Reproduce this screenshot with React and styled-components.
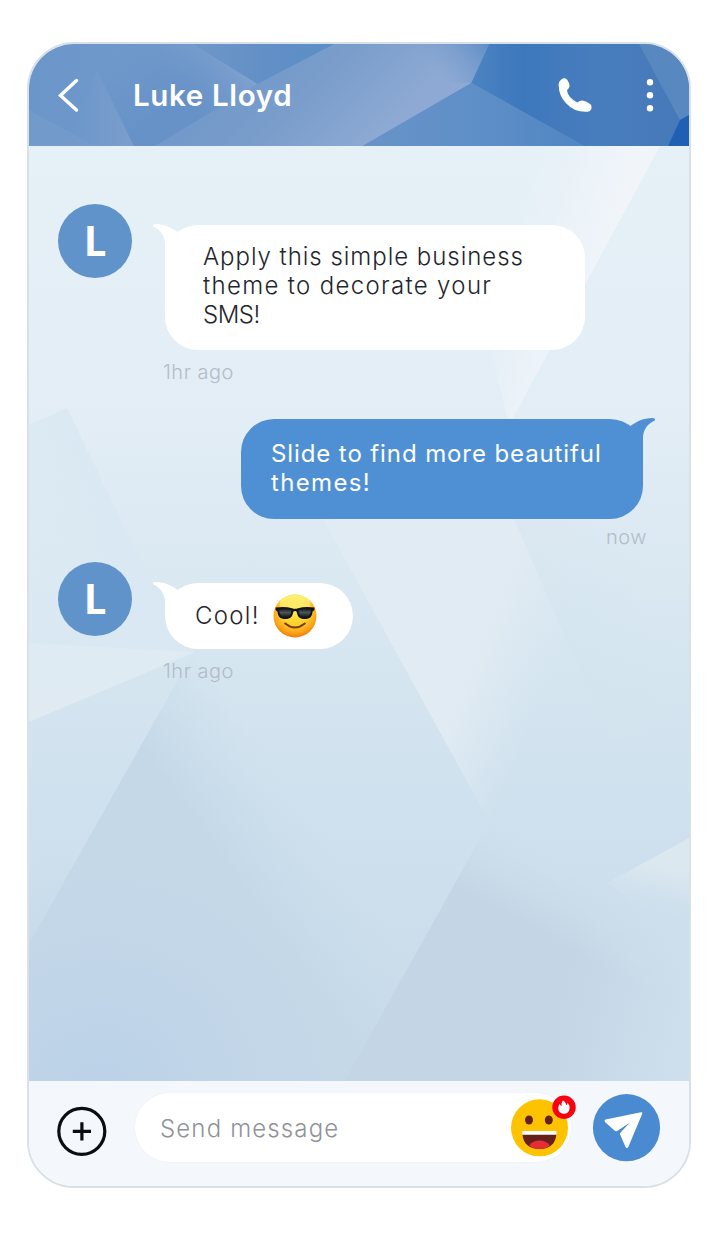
import React from "react";
import styled, { createGlobalStyle } from "styled-components";

const Global = createGlobalStyle`
  * { box-sizing: border-box; }
  body { margin: 0; background: #fff; font-family: Inter, "Open Sans", sans-serif; }
`;

const Page = styled.main`
  width: 719px;
  height: 1253px;
  padding: 42px 28px 65px 27px;
  background: #fff;
`;

const Phone = styled.section`
  width: 664px;
  height: 1146px;
  display: flex;
  flex-direction: column;
  overflow: hidden;
  border: 2px solid #d9e1e7;
  border-radius: 47px;
`;

const Backdrop = styled.svg`
  position: absolute;
  inset: 0;
  width: 100%;
  height: 100%;
  z-index: -1;
`;

const Header = styled.header`
  position: relative;
  isolation: isolate;
  flex: 0 0 102px;
  display: flex;
  align-items: center;
  padding: 0 31px 0 28px;
`;

const Title = styled.h1`
  flex: 1;
  margin: 0 0 0 54px;
  font-size: 29.500px;
  line-height: 40px;
  font-weight: 600;
  letter-spacing: ${(p) => p.$track}px;
  color: #fff;
`;

const IconButton = styled.button`
  display: flex;
  flex: none;
  padding: 0;
  border: 0;
  background: none;
  margin: ${(p) => p.$margin || 0};
`;

const Thread = styled.div`
  position: relative;
  isolation: isolate;
  flex: 0 0 935px;
  display: flex;
  flex-direction: column;
  padding: 58px 43px 0 29px;
`;

const Message = styled.article`
  display: flex;
  align-items: flex-start;
  justify-content: ${(p) => (p.$sent ? "flex-end" : "flex-start")};
  margin-top: ${(p) => p.$gap || 0}px;
`;

const Avatar = styled.div`
  flex: none;
  width: 74px;
  height: 74px;
  margin-right: 33px;
  display: grid;
  place-items: center;
  border-radius: 50%;
  background: #6193cb;
  color: #fff;
  font-family: Lato, sans-serif;
  font-size: 41px;
  line-height: 72px;
  font-weight: 900;
`;

const Stack = styled.div`
  display: flex;
  flex-direction: column;
  align-items: ${(p) => (p.$sent ? "flex-end" : "flex-start")};
  padding-top: ${(p) => (p.$sent ? 0 : 21)}px;
  padding-right: ${(p) => (p.$sent ? 3 : 0)}px;
`;

const Bubble = styled.div`
  position: relative;
  display: flex;
  align-items: flex-start;
  width: ${(p) => p.$w}px;
  height: ${(p) => p.$h}px;
  padding: ${(p) => p.$pad};
  border-radius: 33px;
  background: ${(p) => (p.$sent ? "#4f90d5" : "#fff")};
  color: ${(p) => (p.$sent ? "#fff" : "#1f262c")};
`;

const TailSvg = styled.svg`
  position: absolute;
  top: -1px;
  ${(p) => (p.$sent ? "right: -13px; transform: scaleX(-1);" : "left: -13px;")}
`;

const Line = styled.span`
  display: block;
  white-space: pre;
  font-size: 24px;
  line-height: 29px;
  font-weight: ${(p) => p.$weight || 300};
  letter-spacing: ${(p) => p.$track || 0}px;
`;

const Time = styled.time`
  margin-top: ${(p) => (p.$sent ? 6 : 10)}px;
  margin-right: ${(p) => (p.$sent ? -4 : 0)}px;
  margin-left: ${(p) => (p.$sent ? 0 : -2)}px;
  font-size: 20px;
  line-height: 24px;
  font-weight: 300;
  letter-spacing: 0.5px;
  color: #b3bcc8;
`;

const Composer = styled.footer`
  flex: 1;
  display: flex;
  align-items: flex-start;
  padding: 12px 29px 0 28px;
  background: #f4f7fb;
`;

const Field = styled.div`
  width: 438px;
  height: 69px;
  margin-left: 28px;
  padding: 5px 0 0 25px;
  display: flex;
  justify-content: space-between;
  border-radius: 35px;
  background: #fff;
  box-shadow: 0 0 2px #e9eef3;
`;

const Placeholder = styled.span`
  font-size: 24px;
  line-height: 62px;
  font-weight: 300;
  letter-spacing: ${(p) => p.$track}px;
  color: #8f9398;
`;

const Drawing = styled.svg`
  display: block;
  flex: none;
  overflow: visible;
  margin: ${(p) => p.$margin || 0};
`;

function HeaderFacets() {
  return (
    <Backdrop viewBox="29 44 661 102" preserveAspectRatio="none" aria-hidden="true">
      <defs>
        <linearGradient id="hBase"><stop offset="0" stopColor="#6b96ca" /><stop offset=".5" stopColor="#7b9eca" /><stop offset="1" stopColor="#4d81be" /></linearGradient>
        <linearGradient id="hPale" gradientUnits="userSpaceOnUse" x1="250" y1="30" x2="370" y2="150"><stop offset="0" stopColor="#6f98c9" /><stop offset=".5" stopColor="#7a9dcb" /><stop offset="1" stopColor="#8eaad4" /></linearGradient>
        <linearGradient id="hTop" gradientUnits="userSpaceOnUse" x1="445" y1="84" x2="500" y2="45"><stop offset="0" stopColor="#7499c9" stopOpacity="0" /><stop offset="1" stopColor="#5489c4" /></linearGradient>
        <linearGradient id="hRight" x1="0" x2="1"><stop offset="0" stopColor="#4c83c1" /><stop offset=".25" stopColor="#3d78bd" /><stop offset=".6" stopColor="#487dbd" /><stop offset="1" stopColor="#4679ba" /></linearGradient>
        <linearGradient id="hLow" x1="0" x2="1"><stop offset="0" stopColor="#6893c8" /><stop offset=".5" stopColor="#5f8fc7" /><stop offset="1" stopColor="#5086c4" /></linearGradient>
        <linearGradient id="hBlue" x1="0" x2="1"><stop offset="0" stopColor="#6f98c9" /><stop offset=".5" stopColor="#628fc6" /><stop offset="1" stopColor="#5b8ec7" /></linearGradient>
        <linearGradient id="hWedge" x1="0" x2="1"><stop offset="0" stopColor="#759bcb" stopOpacity="0" /><stop offset="1" stopColor="#7b9ecd" /></linearGradient>
        <linearGradient id="hRidge" gradientUnits="userSpaceOnUse" x1="180" y1="95" x2="235" y2="50"><stop offset="0" stopColor="#7199ca" stopOpacity="0" /><stop offset="1" stopColor="#82a4d0" /></linearGradient>
        <linearGradient id="hMid" gradientUnits="userSpaceOnUse" x1="100" y1="60" x2="150" y2="120"><stop offset="0" stopColor="#6a95c9" stopOpacity="0" /><stop offset="1" stopColor="#6792c8" /></linearGradient>
      </defs>
      <rect x="29" y="44" width="661" height="102" fill="url(#hBase)" />
      <polygon points="29,110 95,146 29,146" fill="#7d9fce" opacity=".4" />
      <polygon points="97,70 134,146 70,146" fill="url(#hWedge)" />
      <polygon points="97,70 134,146 160,146 258,86 193,44 110,44" fill="url(#hMid)" />
      <polygon points="193,44 258,84 200,120 130,44" fill="url(#hRidge)" />
      <polygon points="193,44 335,44 258,84" fill="url(#hBlue)" />
      <polygon points="335,44 258,84 155,146 363,146 472,83 494,44" fill="url(#hPale)" />
      <polygon points="400,44 494,44 472,83 430,83" fill="url(#hTop)" />
      <polygon points="490,44 640,44 681,120 669,146 585,146 472,83" fill="url(#hRight)" />
      <polygon points="472,83 363,146 585,146" fill="url(#hLow)" />
      <polygon points="640,44 690,44 690,116 681,120" fill="#5888c0" />
      <polygon points="681,120 690,115 690,146 669,146" fill="#1f60b5" />
    </Backdrop>
  );
}

function ThreadFacets() {
  return (
    <Backdrop viewBox="29 146 661 935" preserveAspectRatio="none" aria-hidden="true">
      <defs>
        <linearGradient id="bBase" x1="0" y1="0" x2="0" y2="1">
          <stop offset="0" stopColor="#e5f0f7" /><stop offset=".3" stopColor="#e2edf5" /><stop offset=".5" stopColor="#d8e7f1" />
          <stop offset=".7" stopColor="#cfe1ee" /><stop offset="1" stopColor="#c9dbea" />
        </linearGradient>
        <linearGradient id="bBeam" gradientUnits="userSpaceOnUse" x1="503" y1="240" x2="600" y2="272"><stop offset="0" stopColor="#f1f5fa" stopOpacity="0" /><stop offset="1" stopColor="#f1f5fa" stopOpacity=".95" /></linearGradient>
        <linearGradient id="bLeft" gradientUnits="userSpaceOnUse" x1="20" y1="600" x2="130" y2="545"><stop offset="0" stopColor="#dbeaf3" stopOpacity=".5" /><stop offset="1" stopColor="#d9e8f2" stopOpacity=".9" /></linearGradient>
        <linearGradient id="bPale" gradientUnits="userSpaceOnUse" x1="485" y1="633" x2="558" y2="662"><stop offset="0" stopColor="#e1ebf3" /><stop offset="1" stopColor="#dce9f2" stopOpacity="0" /></linearGradient>
        <linearGradient id="bSide" gradientUnits="userSpaceOnUse" x1="545" y1="590" x2="630" y2="550"><stop offset="0" stopColor="#d3e4ee" stopOpacity=".5" /><stop offset="1" stopColor="#d3e4ee" stopOpacity="0" /></linearGradient>
        <linearGradient id="bWedge" x1="0" y1="0" x2="0" y2="1"><stop offset="0" stopColor="#dfebf4" /><stop offset="1" stopColor="#dfeaf1" /></linearGradient>
        <linearGradient id="bDarkL" gradientUnits="userSpaceOnUse" x1="238" y1="885" x2="320" y2="827"><stop offset="0" stopColor="#c5d8e8" /><stop offset="1" stopColor="#c9dcea" stopOpacity="0" /></linearGradient>
        <linearGradient id="bDarkR" gradientUnits="userSpaceOnUse" x1="555" y1="940" x2="590" y2="876"><stop offset="0" stopColor="#c4d5e5" /><stop offset="1" stopColor="#cadbe9" stopOpacity="0" /></linearGradient>
        <linearGradient id="bCorner" gradientUnits="userSpaceOnUse" x1="560" y1="1010" x2="680" y2="1040"><stop offset="0" stopColor="#cddfed" stopOpacity="0" /><stop offset="1" stopColor="#cddfed" /></linearGradient>
        <linearGradient id="bFlash" gradientUnits="userSpaceOnUse" x1="665" y1="868" x2="655" y2="918"><stop offset="0" stopColor="#dce8f0" /><stop offset="1" stopColor="#cfe0ec" stopOpacity="0" /></linearGradient>
        <radialGradient id="bPool" gradientUnits="userSpaceOnUse" cx="100" cy="1100" r="250"><stop offset="0" stopColor="#bad1e8" /><stop offset="1" stopColor="#bfd4e8" stopOpacity="0" /></radialGradient>
      </defs>
      <rect x="29" y="146" width="661" height="935" fill="url(#bBase)" />
      <polygon points="440,146 661,146 510,425" fill="url(#bBeam)" />
      <polygon points="29,425 67,408 160,600 195,652 29,643" fill="url(#bLeft)" />
      <polygon points="302,480 628,480 490,822" fill="url(#bPale)" />
      <polygon points="515,519 690,519 690,730 610,740" fill="url(#bSide)" />
      <polygon points="29,643 195,652 29,722" fill="url(#bWedge)" />
      <polygon points="195,650 29,944 29,1081 500,1081" fill="url(#bDarkL)" />
      <polygon points="490,822 345,1081 690,1081 690,930" fill="url(#bDarkR)" />
      <polygon points="560,900 690,900 690,1081 560,1081" fill="url(#bCorner)" />
      <polygon points="608,883 690,838 690,940" fill="url(#bFlash)" />
      <rect x="29" y="820" width="400" height="261" fill="url(#bPool)" />
    </Backdrop>
  );
}

function Tail({ sent }) {
  return (
    <TailSvg $sent={sent} width="34" height="36" viewBox="0 0 34 36" aria-hidden="true">
      <path d="M1.300 2.600C.2 1.300 1.300.1 3.600.1c8.500 0 16.200 3.600 22.100 8L24 20 13 35V18.500C12 10.500 8 5.600 1.300 2.600Z" fill={sent ? "#4f90d5" : "#fff"} />
    </TailSvg>
  );
}

function CoolFace() {
  return (
    <Drawing width="44" height="44" viewBox="0 0 44 44" $margin="-7px 0 0 13px" role="img" aria-label="cool face">
      <defs>
        <radialGradient id="face" cx=".5" cy=".38" r=".62"><stop offset="0" stopColor="#ffe94a" /><stop offset=".55" stopColor="#ffcf2a" /><stop offset=".82" stopColor="#fda31a" /><stop offset="1" stopColor="#ee7d0b" /></radialGradient>
        <linearGradient id="shine" x1="0" y1="0" x2="0" y2="1"><stop offset="0" stopColor="#fff36b" /><stop offset="1" stopColor="#fff9a8" stopOpacity=".2" /></linearGradient>
        <linearGradient id="lens" x1="0" y1="0" x2="0" y2="1"><stop offset="0" stopColor="#20262a" /><stop offset=".4" stopColor="#4c555a" /><stop offset="1" stopColor="#0c1013" /></linearGradient>
      </defs>
      <circle cx="22" cy="22" r="21.500" fill="url(#face)" />
      <ellipse cx="22" cy="9.500" rx="15.500" ry="8.500" fill="url(#shine)" />
      <path d="M2.500 13.500Q12 12.200 19 14.200Q22 15.200 25 14.200Q32 12.200 41.500 13.500V16L39.600 17.500C39 22.500 37.300 25 31.500 25C26.500 25 24.400 22.400 23.700 17.700Q22 16.500 20.300 17.700C19.600 22.400 17.500 25 12.500 25C6.700 25 5 22.500 4.400 17.500L2.500 16Z" fill="#111518" />
      <path d="M6 16Q13 14.500 18.500 16.500Q18 23.300 12.500 23.500Q6.500 23.300 6 16ZM25.500 16.500Q31 14.500 38 16Q37.500 23.300 31.500 23.500Q26 23.300 25.500 16.500Z" fill="url(#lens)" />
      <path d="M12.200 29.500Q22 37.500 31.800 29.500" fill="none" stroke="#773b08" strokeWidth="2" strokeLinecap="round" />
    </Drawing>
  );
}

function GrinFace() {
  return (
    <Drawing width="65" height="61" viewBox="511 1095 65 61" $margin="-3px -5px 0 0" role="img" aria-label="emoji">
      <circle cx="539.500" cy="1127.800" r="28.500" fill="#fdc300" />
      <ellipse cx="529" cy="1120" rx="4" ry="4.600" fill="#652019" />
      <ellipse cx="548.800" cy="1120" rx="4" ry="4.600" fill="#652019" />
      <path d="M522.500 1134H556.300C556 1144 549 1149 539.400 1149S522.800 1144 522.500 1134Z" fill="#652019" />
      <path d="M522.300 1131H556.500V1134.700H522.300Z" fill="#fff" />
      <path d="M529 1145.500Q533 1140.500 539.500 1140.500T550 1145.500Q546 1149 539.500 1149T529 1145.500Z" fill="#e52d35" />
      <circle cx="564" cy="1107.300" r="11.700" fill="#fb0010" />
      <path d="M562.800 1100.500Q566 1102 566.200 1105.200Q567.700 1104.500 567.500 1102.600Q570 1105.500 569.500 1109A5.700 5.700 0 0 1 558.200 1108.600Q558.200 1106 559.700 1103.800Q560.200 1105.500 561.500 1106Q561 1103 562.800 1100.500Z" fill="#fff" />
    </Drawing>
  );
}

export default function App() {
  return (
    <>
      <Global />
      <Page>
        <Phone>
          <Header>
            <HeaderFacets />
            <IconButton aria-label="Back">
              <Drawing width="22" height="36" viewBox="57 77 22 36">
                <path d="M76.500 80.500L60.500 95.500L76.500 110" fill="none" stroke="#fff" strokeWidth="3.400" strokeLinecap="round" strokeLinejoin="miter" />
              </Drawing>
            </IconButton>
            <Title $track={0.65}>Luke Lloyd</Title>
            <IconButton aria-label="Call" $margin="0 49px 0 0">
              <Drawing width="36" height="36" viewBox="557 77 36 36">
                <path d="M561.200 79.600Q564.600 77 567.200 79.700Q569.400 82.800 569.600 86Q569.500 88 567 90.200Q567.600 97 577.300 102.600Q579.800 100.200 582.500 100.400Q586.500 100.800 590.500 104.200Q592.600 106.300 591.400 109Q590.400 111.400 587.600 111.800Q574.500 112.600 565.800 103Q558.700 95.500 558.600 84.500Q558.800 81.500 561.200 79.600Z" fill="#fff" />
              </Drawing>
            </IconButton>
            <IconButton aria-label="More">
              <Drawing width="16" height="36" viewBox="642 77 16 36" fill="#fff">
                <circle cx="650" cy="82.300" r="3.200" />
                <circle cx="650" cy="95.300" r="3.200" />
                <circle cx="650" cy="108.200" r="3.200" />
              </Drawing>
            </IconButton>
          </Header>

          <Thread>
            <ThreadFacets />
            <Message>
              <Avatar>L</Avatar>
              <Stack>
                <Bubble $w={420} $h={125} $pad="17px 0 0 38px">
                  <Tail />
                  <div>
                    <Line $track={0.96}>Apply this simple business</Line>
                    <Line $track={1.33}>theme to decorate your</Line>
                    <Line $track={-0.5}>SMS!</Line>
                  </div>
                </Bubble>
                <Time>1hr ago</Time>
              </Stack>
            </Message>
            <Message $sent $gap={35}>
              <Stack $sent>
                <Bubble $sent $w={402} $h={100} $pad="20px 0 0 30px">
                  <Tail sent />
                  <div>
                    <Line $weight={400} $track={0.9}>Slide to find more beautiful</Line>
                    <Line $weight={400} $track={1.35}>themes!</Line>
                  </div>
                </Bubble>
                <Time $sent>now</Time>
              </Stack>
            </Message>
            <Message $gap={13}>
              <Avatar>L</Avatar>
              <Stack>
                <Bubble $w={188} $h={66} $pad="18px 0 0 30px">
                  <Tail />
                  <Line $track={1.3}>Cool!</Line>
                  <CoolFace />
                </Bubble>
                <Time>1hr ago</Time>
              </Stack>
            </Message>
          </Thread>

          <Composer>
            <IconButton aria-label="Add" $margin="13px 0 0 0">
              <Drawing width="50" height="50" viewBox="0 0 50 50" fill="none" stroke="#0b0d10" strokeWidth="3.200">
                <circle cx="24.800" cy="25.300" r="23" />
                <path d="M15.800 25.300H34M24.900 16.200V34.400" />
              </Drawing>
            </IconButton>
            <Field>
              <Placeholder $track={1.15}>Send message</Placeholder>
              <GrinFace />
            </Field>
            <IconButton aria-label="Send" $margin="1px 0 0 21px">
              <Drawing width="68" height="68" viewBox="592.500 1094 68 68">
                <circle cx="627" cy="1127.700" r="33.600" fill="#4a8ad0" />
                <path d="M606 1119.500L641.500 1112.200Q643.300 1112 642.700 1113.800L628.800 1147Q627.400 1149.300 626 1147L620.600 1134.500Q620.200 1133.400 621 1132.600L630.500 1122.500L618.500 1130.600Q616.500 1131.700 615 1130.500L605.500 1122Q604.300 1120 606 1119.500Z" fill="#fff" />
              </Drawing>
            </IconButton>
          </Composer>
        </Phone>
      </Page>
    </>
  );
}
